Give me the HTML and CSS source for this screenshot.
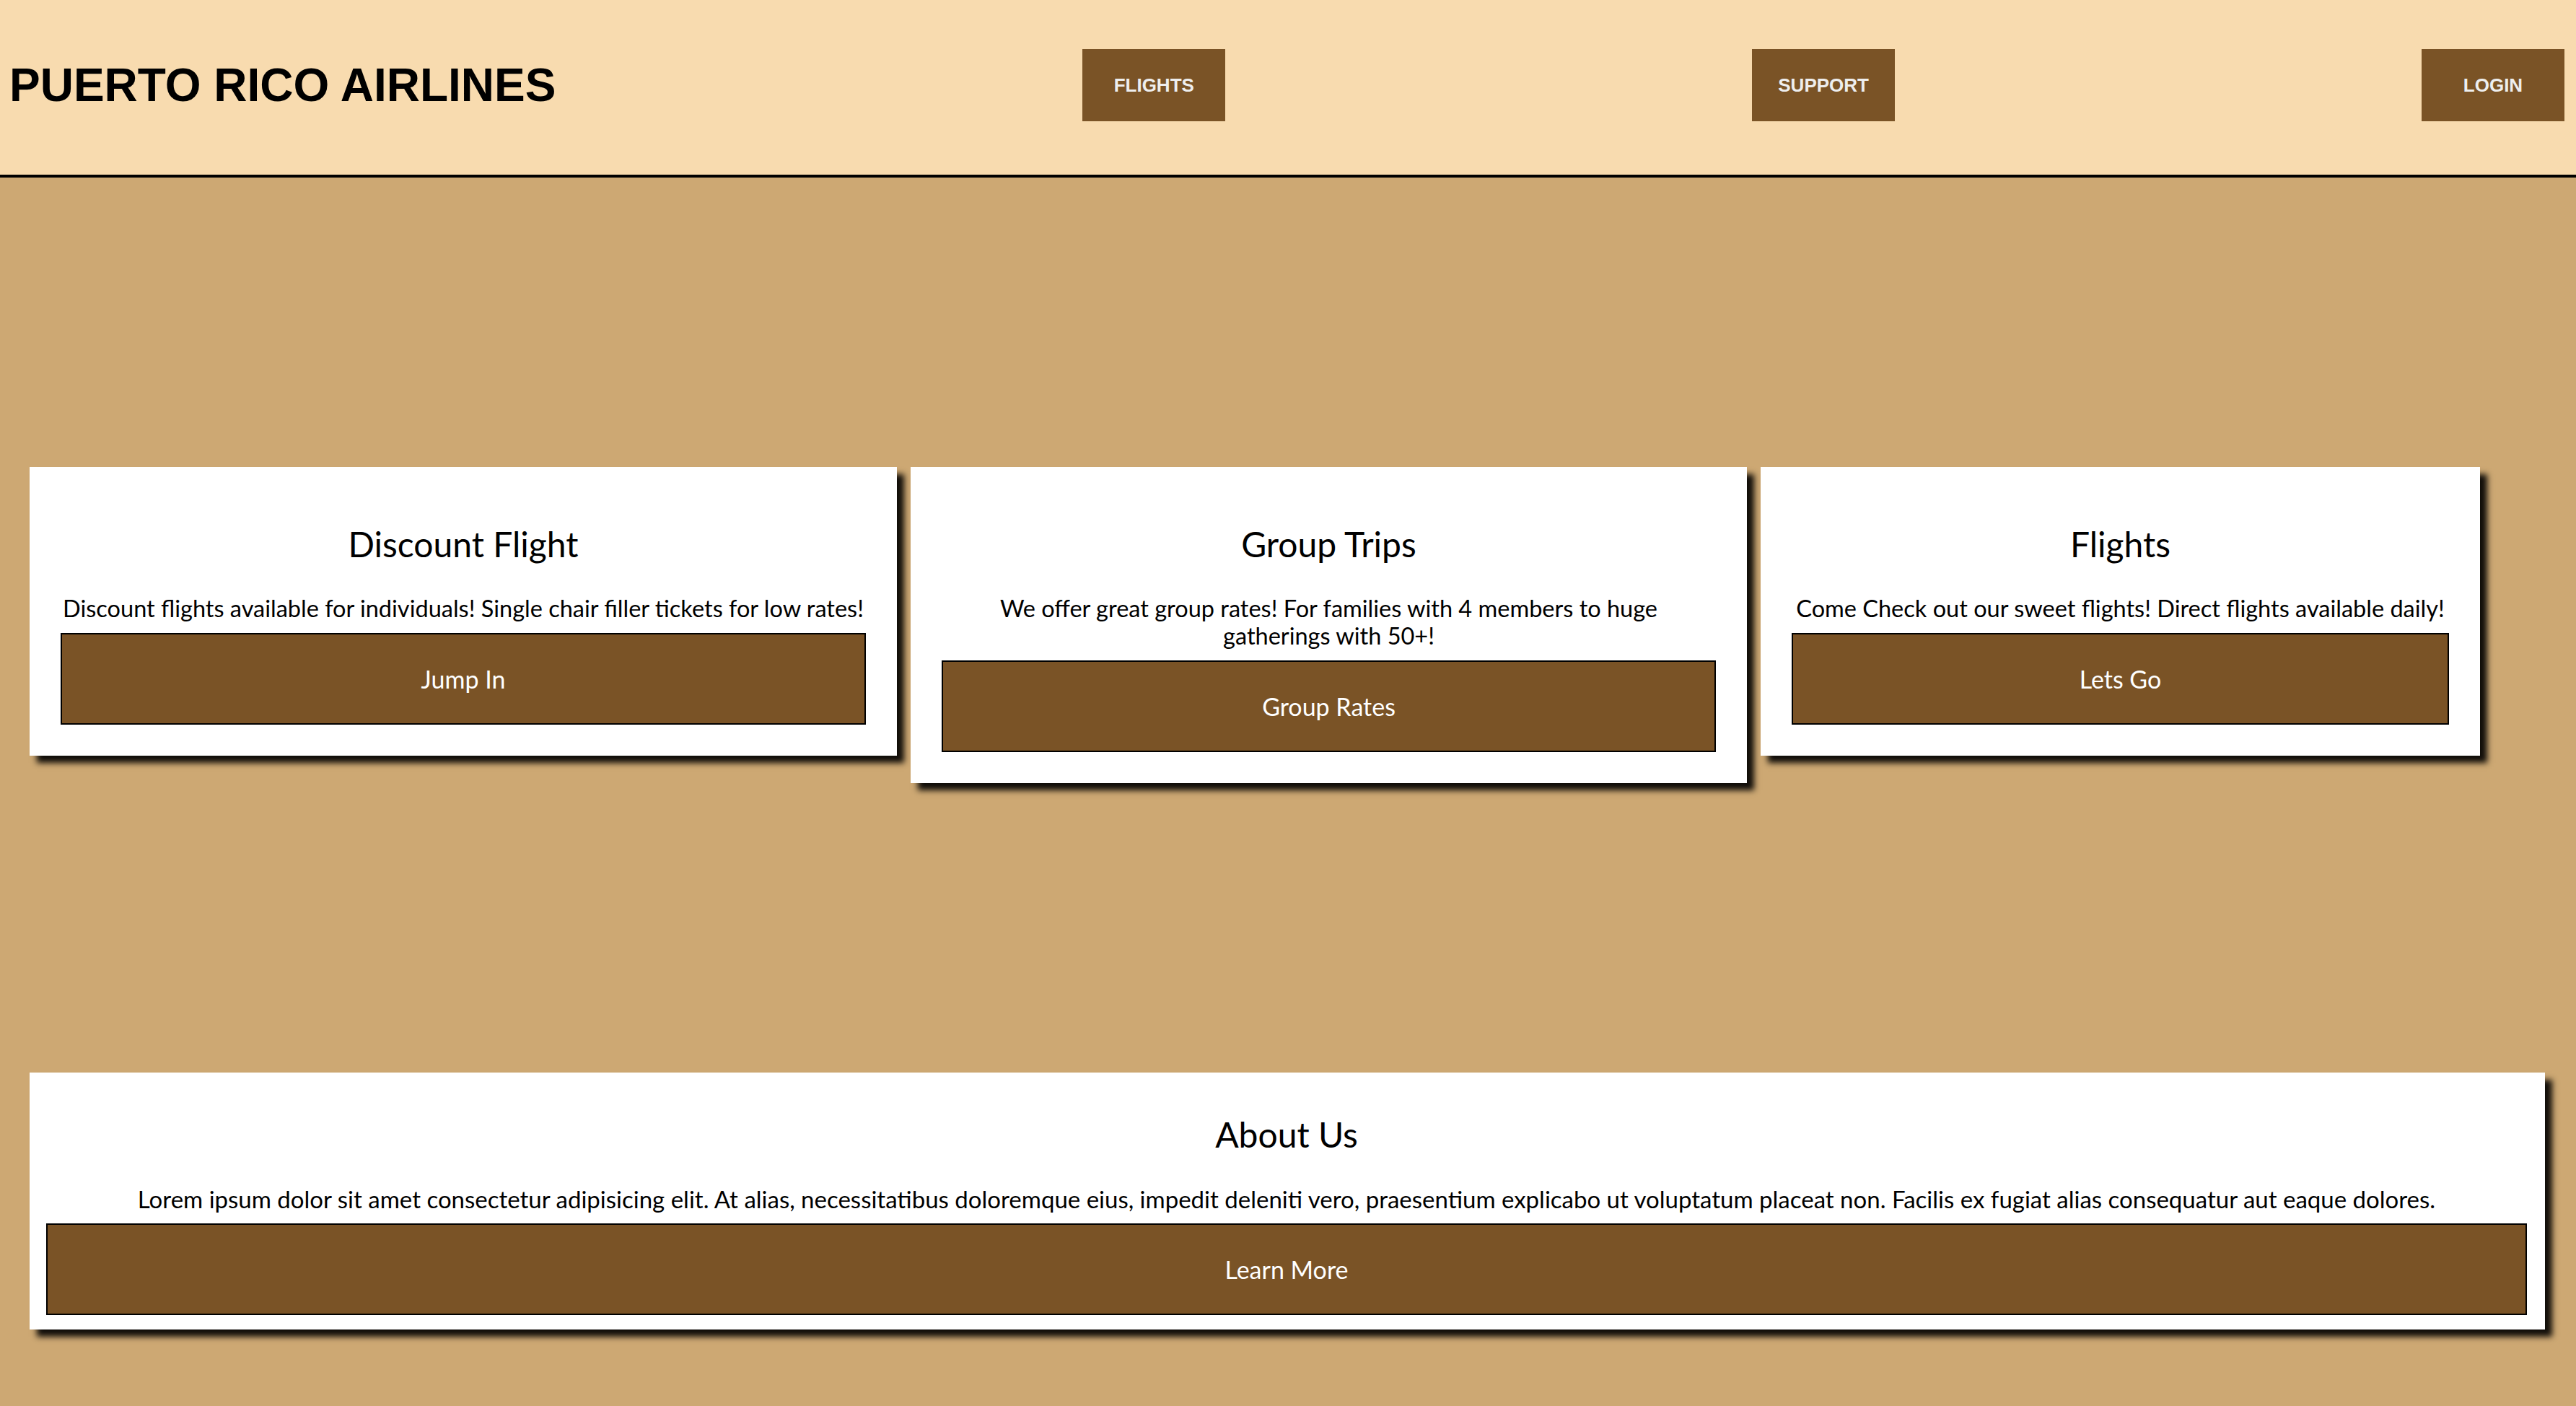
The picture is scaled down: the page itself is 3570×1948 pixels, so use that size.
FILE: index.html
```html
<!DOCTYPE html>
<html lang="en">
<head>
<meta charset="utf-8">
<title>Puerto Rico Airlines</title>
<link rel="stylesheet" href="styles.css">
</head>
<body>
<header class="site-header">
  <h1 class="brand">PUERTO RICO AIRLINES</h1>
  <a class="nav-btn" href="#">FLIGHTS</a>
  <a class="nav-btn" href="#">SUPPORT</a>
  <a class="nav-btn" href="#">LOGIN</a>
</header>
<main>
  <section class="offers">
    <div class="card card-discount">
      <h2 class="card-title">Discount Flight</h2>
      <p class="card-text">Discount flights available for individuals! Single chair filler tickets for low rates!</p>
      <a class="card-btn" href="#">Jump In</a>
    </div>
    <div class="card card-group">
      <h2 class="card-title">Group Trips</h2>
      <p class="card-text">We offer great group rates! For families with 4 members to huge<br>gatherings with 50+!</p>
      <a class="card-btn" href="#">Group Rates</a>
    </div>
    <div class="card card-flights">
      <h2 class="card-title">Flights</h2>
      <p class="card-text">Come Check out our sweet flights! Direct flights available daily!</p>
      <a class="card-btn" href="#">Lets Go</a>
    </div>
  </section>
  <section class="about">
    <h2 class="card-title about-title">About Us</h2>
    <p class="card-text about-text">Lorem ipsum dolor sit amet consectetur adipisicing elit. At alias, necessitatibus doloremque eius, impedit deleniti vero, praesentium explicabo ut voluptatum placeat non. Facilis ex fugiat alias consequatur aut eaque dolores.</p>
    <a class="card-btn" href="#">Learn More</a>
  </section>
</main>
</body>
</html>
```
FILE: styles.css
```css
html, body {
  margin: 0;
  padding: 0;
}

body {
  background: #cda873;
  font-family: "Lato", "Liberation Sans", sans-serif;
  color: #000;
  min-height: 1948px;
}

.site-header {
  box-sizing: border-box;
  height: 246px;
  background: #f8dbaf;
  border-bottom: 4px solid #000;
  display: flex;
  align-items: center;
  justify-content: space-between;
  padding: 0 16px 6px 13px;
}

.brand {
  margin: 0;
  font-family: "Liberation Sans", Arial, sans-serif;
  font-weight: bold;
  font-size: 64px;
  line-height: 1;
  color: #000;
}

.nav-btn {
  width: 198px;
  height: 100px;
  display: flex;
  align-items: center;
  justify-content: center;
  background: #7a5326;
  color: #eeeeee;
  font-family: "Liberation Sans", Arial, sans-serif;
  font-weight: bold;
  font-size: 26px;
  text-decoration: none;
}

.offers {
  display: flex;
  align-items: flex-start;
  gap: 19px;
  padding: 401px 0 401px 41px;
}

.card {
  box-sizing: border-box;
  background: #fff;
  padding: 39px 43px 43px;
  box-shadow: 10px 10px 8px rgba(0, 0, 0, 0.92);
  text-align: center;
  flex: none;
}

.card-discount { width: 1202px; }
.card-group { width: 1159px; }
.card-flights { width: 997px; }

.card-title {
  margin: 40px 0 42px;
  font-size: 48px;
  font-weight: normal;
  line-height: 56px;
}

.card-text {
  margin: 0 0 15px;
  font-size: 32.5px;
  line-height: 38px;
  white-space: nowrap;
}

.card-group .card-text {
  white-space: normal;
}

.about-text {
  font-size: 33px;
}

.card-btn {
  display: flex;
  align-items: center;
  justify-content: center;
  height: 127px;
  box-sizing: border-box;
  background: #7a5326;
  border: 2px solid #000;
  color: #fff;
  font-size: 34px;
  text-decoration: none;
}

.about {
  box-sizing: border-box;
  background: #fff;
  margin: 0 43px 0 41px;
  padding: 20px 25px 20px 23px;
  box-shadow: 10px 10px 8px rgba(0, 0, 0, 0.92);
  text-align: center;
}

.about-title {
  margin-top: 38px;
}
```
